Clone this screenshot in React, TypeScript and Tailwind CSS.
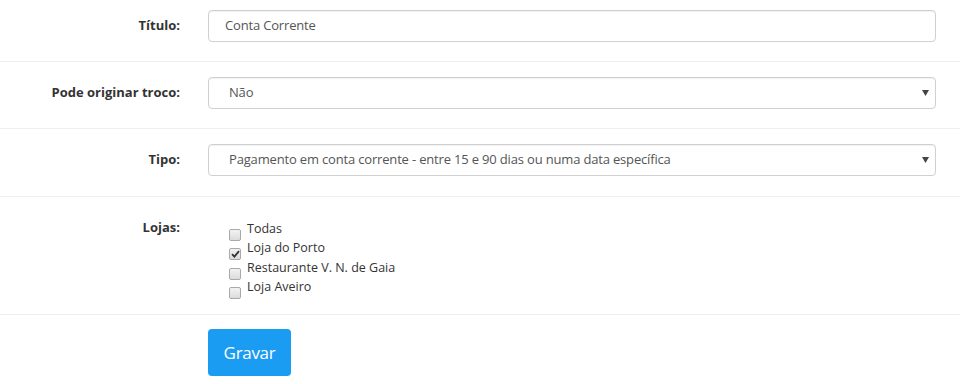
import { useState } from 'react';

const lojas = [
  { id: 'todas', label: 'Todas', checked: false },
  { id: 'porto', label: 'Loja do Porto', checked: true },
  { id: 'gaia', label: 'Restaurante V. N. de Gaia', checked: false },
  { id: 'aveiro', label: 'Loja Aveiro', checked: false },
];

function Caret() {
  return (
    <svg width="7" height="6" viewBox="0 0 7 6" className="shrink-0">
      <path d="M0 0H7L3.5 6Z" fill="#444" />
    </svg>
  );
}

function Checkbox({ checked }: { checked: boolean }) {
  return (
    <span className="mt-[10px] flex h-[12px] w-[12px] shrink-0 items-center justify-center rounded-[2px] border border-[#a9a9a9] bg-gradient-to-b from-[#f2f2f2] to-[#dcdcdc]">
      {checked && (
        <svg width="9" height="8" viewBox="0 0 9 8">
          <path d="M1 4.2L3.4 6.6L8 1.2" stroke="#333" strokeWidth="1.8" fill="none" />
        </svg>
      )}
    </span>
  );
}

export default function App() {
  const [checked, setChecked] = useState(lojas.map((l) => l.checked));

  return (
    <div className="h-[384px] w-[960px] overflow-hidden bg-white font-['Open_Sans',sans-serif] text-[#333]">
      <div className="flex items-center border-b border-[#eeeeee] pb-[19px] pt-[10px]">
        <label className="w-[180px] shrink-0 text-right text-[13px] font-bold">Título:</label>
        <div className="ml-[28px] mr-[24px] flex h-[32px] flex-1 items-center rounded-[4px] border border-[#d0d0d0] px-[16px] text-[13px] tracking-[-0.17px] text-[#555] shadow-[inset_0_1px_1px_rgba(0,0,0,0.06)]">
          Conta Corrente
        </div>
      </div>

      <div className="flex items-center border-b border-[#eeeeee] pb-[19px] pt-[15px]">
        <label className="w-[180px] shrink-0 text-right text-[13px] font-bold">Pode originar troco:</label>
        <div className="ml-[28px] mr-[24px] flex h-[32px] flex-1 items-center justify-between rounded-[4px] border border-[#d0d0d0] pl-[20px] pr-[6px] text-[13px] tracking-[-0.17px] text-[#555] shadow-[inset_0_1px_1px_rgba(0,0,0,0.06)]">
          <span>Não</span>
          <Caret />
        </div>
      </div>

      <div className="flex items-center border-b border-[#eeeeee] pb-[20px] pt-[15px]">
        <label className="w-[180px] shrink-0 text-right text-[13px] font-bold">Tipo:</label>
        <div className="ml-[28px] mr-[24px] flex h-[32px] flex-1 items-center justify-between rounded-[4px] border border-[#d0d0d0] pl-[20px] pr-[6px] text-[13px] tracking-[-0.17px] text-[#555] shadow-[inset_0_1px_1px_rgba(0,0,0,0.06)]">
          <span>Pagamento em conta corrente - entre 15 e 90 dias ou numa data específica</span>
          <Caret />
        </div>
      </div>

      <div className="flex items-start border-b border-[#eeeeee] pb-[18px] pt-[22px]">
        <label className="-mt-[1px] w-[180px] shrink-0 text-right text-[13px] font-bold leading-[19px]">Lojas:</label>
        <div className="ml-[49px] flex flex-col">
          {lojas.map((l, i) => (
            <div
              key={l.id}
              className="flex h-[19.3px] items-start gap-[6px] text-[12.5px] leading-[19px] text-[#333]"
              onClick={() => setChecked(checked.map((c, j) => (j === i ? !c : c)))}
            >
              <Checkbox checked={checked[i]} />
              <span>{l.label}</span>
            </div>
          ))}
        </div>
      </div>

      <div className="pl-[208px] pt-[14px]">
        <button className="h-[47px] w-[83px] rounded-[4px] bg-[#1a9cf2] text-[17px] tracking-[-0.3px] text-white">Gravar</button>
      </div>
    </div>
  );
}
